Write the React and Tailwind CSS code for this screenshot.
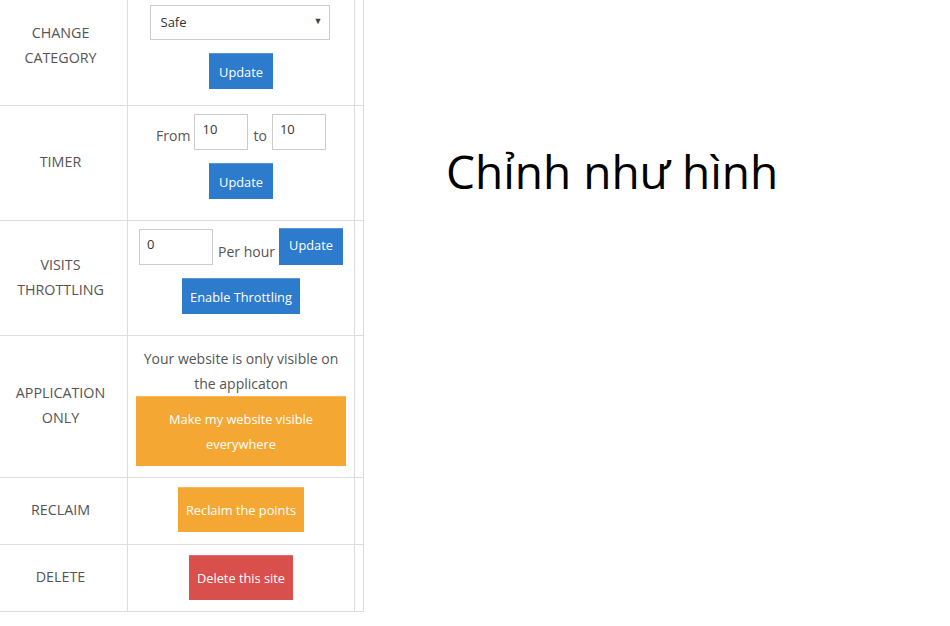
import React, { useState } from "react";

const cell = "border border-[#dddddd] text-center align-middle";
const label = "border border-[#dddddd] text-center align-middle leading-[25px] pr-[6px] pb-[3px]";
const btn = "text-[12.8px] text-white px-[8px] leading-[20px] border-t border-white/20";

const App = () => {
  const [category, setCategory] = useState("safe");
  const [from, setFrom] = useState("10");
  const [to, setTo] = useState("10");
  const [visits, setVisits] = useState("0");

  return (
    <div className="flex w-[950px] h-[626px] bg-white font-['Open_Sans',sans-serif]">
      {/* Settings table */}
      <table className="table-fixed border-collapse w-[364px] h-[612px] -mt-px -ml-px self-start text-[14.3px] text-[#555555]">
        <colgroup>
          <col className="w-[128px]" />
          <col className="w-[227px]" />
          <col className="w-[9px]" />
        </colgroup>
        <tbody>
          <tr className="h-[106px]">
            <td className={`${label} pb-[16px]`}>
              CHANGE
              <br />
              CATEGORY
            </td>
            <td className={`${cell} align-top`}>
              <div className="flex flex-col items-center pt-[5px]">
                <div className="relative w-[180px] h-[35px] mr-[3px]">
                  <select
                    value={category}
                    onChange={(e) => setCategory(e.target.value)}
                    className="appearance-none w-full h-full border border-[#cccccc] bg-white pl-[10px] text-[13px] text-[#333333] outline-none"
                  >
                    <option value="safe">Safe</option>
                    <option value="adult">Adult</option>
                  </select>
                  <span className="absolute right-[7px] top-[9px] text-[9px] text-[#444444] pointer-events-none">
                    ▼
                  </span>
                </div>
                <button className={`${btn} px-[10px] bg-[#2d7bcd] h-[36px] mt-[13px]`}>Update</button>
              </div>
            </td>
            <td className={cell}></td>
          </tr>
          <tr className="h-[115px]">
            <td className={label}>TIMER</td>
            <td className={`${cell} align-top`}>
              <div className="flex flex-col items-center pt-[8px]">
                <div className="flex items-center text-[14px] text-[#555555]">
                  <span className="mr-[4px] mt-[7px]">From</span>
                  <input
                    value={from}
                    onChange={(e) => setFrom(e.target.value)}
                    className="w-[54px] h-[36px] border border-[#cccccc] pl-[7px] pb-[6px] text-[13px] text-[#333333] outline-none"
                  />
                  <span className="mx-[5px] mt-[7px]">to</span>
                  <input
                    value={to}
                    onChange={(e) => setTo(e.target.value)}
                    className="w-[54px] h-[36px] border border-[#cccccc] pl-[7px] pb-[6px] text-[13px] text-[#333333] outline-none"
                  />
                </div>
                <button className={`${btn} px-[10px] bg-[#2d7bcd] h-[36px] mt-[13px]`}>Update</button>
              </div>
            </td>
            <td className={cell}></td>
          </tr>
          <tr className="h-[115px]">
            <td className={label}>
              VISITS
              <br />
              THROTTLING
            </td>
            <td className={`${cell} align-top`}>
              <div className="flex flex-col items-center pt-[7px]">
                <div className="flex items-center">
                  <input
                    value={visits}
                    onChange={(e) => setVisits(e.target.value)}
                    className="w-[74px] h-[36px] border border-[#cccccc] pl-[7px] pb-[6px] text-[13px] text-[#333333] outline-none"
                  />
                  <span className="ml-[5px] mr-[4px] mt-[10px] text-[14px]">Per hour</span>
                  <button className={`${btn} px-[10px] bg-[#2d7bcd] h-[37px] pb-[4px]`}>Update</button>
                </div>
                <button className={`${btn} bg-[#2d7bcd] h-[36px] mt-[13px]`}>Enable Throttling</button>
              </div>
            </td>
            <td className={cell}></td>
          </tr>
          <tr className="h-[142px]">
            <td className={label}>
              APPLICATION
              <br />
              ONLY
            </td>
            <td className={`${cell} align-top`}>
              <div className="flex flex-col items-center pt-[10px]">
                <p className="leading-[25px] px-[8px] text-[14px]">
                  Your website is only visible on the applicaton
                </p>
                <button className="w-[210px] h-[70px] bg-[#f5a733] text-white text-[12.8px] leading-[25px] px-[20px] border-t border-white/20">
                  Make my website visible everywhere
                </button>
              </div>
            </td>
            <td className={cell}></td>
          </tr>
          <tr className="h-[67px]">
            <td className={label}>RECLAIM</td>
            <td className={`${cell} pb-[3px]`}>
              <button className={`${btn} bg-[#f5a733] h-[45px]`}>Reclaim the points</button>
            </td>
            <td className={cell}></td>
          </tr>
          <tr className="h-[67px]">
            <td className={label}>DELETE</td>
            <td className={`${cell} pb-[1px]`}>
              <button className={`${btn} bg-[#d94f4b] h-[45px]`}>Delete this site</button>
            </td>
            <td className={cell}></td>
          </tr>
        </tbody>
      </table>

      {/* Note */}
      <div className="pl-[82px] pt-[140px]">
        <h1 className="text-[46px] leading-[62px] text-black font-['Open_Sans',sans-serif]">
          Chỉnh như hình
        </h1>
      </div>
    </div>
  );
};

export default App;
